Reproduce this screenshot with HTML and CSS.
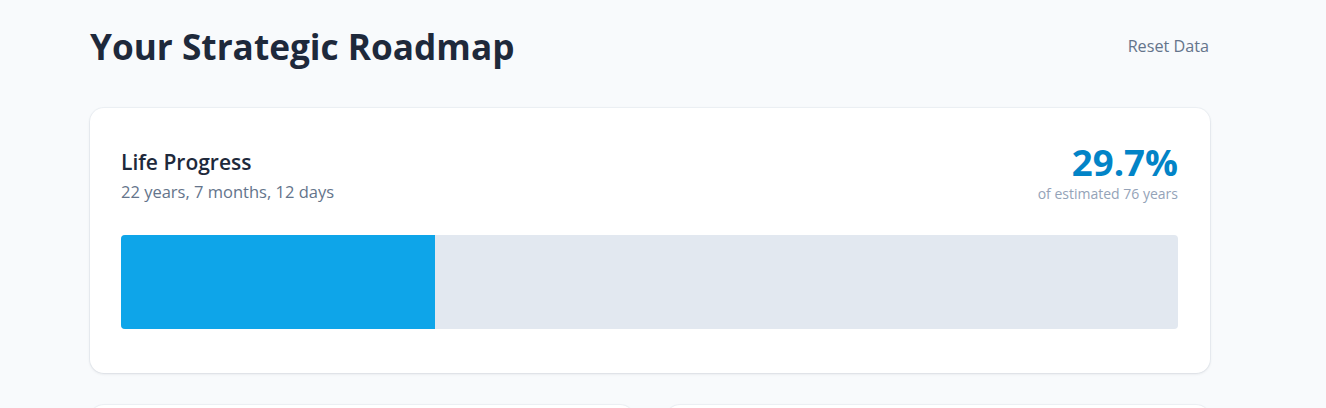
FILE: index.html
```html
<!DOCTYPE html>
<html lang="en">
<head>
<meta charset="utf-8">
<title>Your Strategic Roadmap</title>
<link rel="stylesheet" href="styles.css">
</head>
<body>
<main class="page">
  <header class="page-header">
    <h1 class="page-title">Your Strategic Roadmap</h1>
    <button class="reset-btn" type="button">Reset Data</button>
  </header>

  <section class="card progress-card">
    <div class="progress-head">
      <div class="progress-info">
        <h2 class="progress-title">Life Progress</h2>
        <p class="progress-age">22 years, 7 months, 12 days</p>
      </div>
      <div class="progress-stat">
        <div class="progress-pct">29.7%</div>
        <div class="progress-note">of estimated 76 years</div>
      </div>
    </div>
    <div class="bar-track">
      <div class="bar-fill" style="width: 29.7%"></div>
    </div>
  </section>

  <div class="card-grid">
    <section class="card sub-card"></section>
    <section class="card sub-card"></section>
  </div>
</main>
</body>
</html>
```

FILE: styles.css
```css
* { box-sizing: border-box; }

html, body {
  margin: 0;
  padding: 0;
  background: #f8fafc;
  font-family: "Open Sans", "Noto Sans", sans-serif;
  color: #1e293b;
}

.page {
  width: 1120px;
  margin-left: 90px;
  padding-top: 24px;
}

.page-header {
  display: flex;
  justify-content: space-between;
  align-items: center;
  height: 44px;
  margin-bottom: 40px;
}

.page-title {
  margin: 0;
  font-size: 35.2px;
  line-height: 44px;
  font-weight: 700;
  color: #1e293b;
}

.reset-btn {
  border: 0;
  background: none;
  padding: 0 1px 0 0;
  font-family: inherit;
  font-size: 16.2px;
  line-height: 24px;
  color: #64748b;
  cursor: pointer;
}

.card {
  background: #ffffff;
  border-radius: 14px;
  box-shadow: 0 1px 3px rgba(15, 23, 42, 0.1), 0 0 0 1px rgba(226, 232, 240, 0.45);
}

.progress-card {
  padding: 32px 32px 44px 31px;
}

.progress-head {
  display: flex;
  justify-content: space-between;
  align-items: flex-start;
  margin-bottom: 31px;
}

.progress-title {
  margin: 0;
  padding-top: 8px;
  font-size: 21px;
  line-height: 28px;
  font-weight: 600;
  color: #1e293b;
}

.progress-age {
  margin: 4px 0 0;
  font-size: 16.5px;
  line-height: 24px;
  color: #64748b;
}

.progress-stat {
  text-align: right;
}

.progress-pct {
  padding-top: 2px;
  font-size: 36.6px;
  line-height: 40px;
  font-weight: 700;
  color: #0284c7;
}

.progress-note {
  margin-top: 2px;
  font-size: 14px;
  line-height: 20px;
  color: #94a3b8;
}

.bar-track {
  height: 94px;
  background: #e2e8f0;
  border-radius: 4px;
  overflow: hidden;
}

.bar-fill {
  height: 100%;
  background: #0ea5e9;
}

.card-grid {
  display: grid;
  grid-template-columns: 1fr 1fr;
  gap: 32px;
  margin-top: 32px;
}

.sub-card {
  height: 240px;
}
```
